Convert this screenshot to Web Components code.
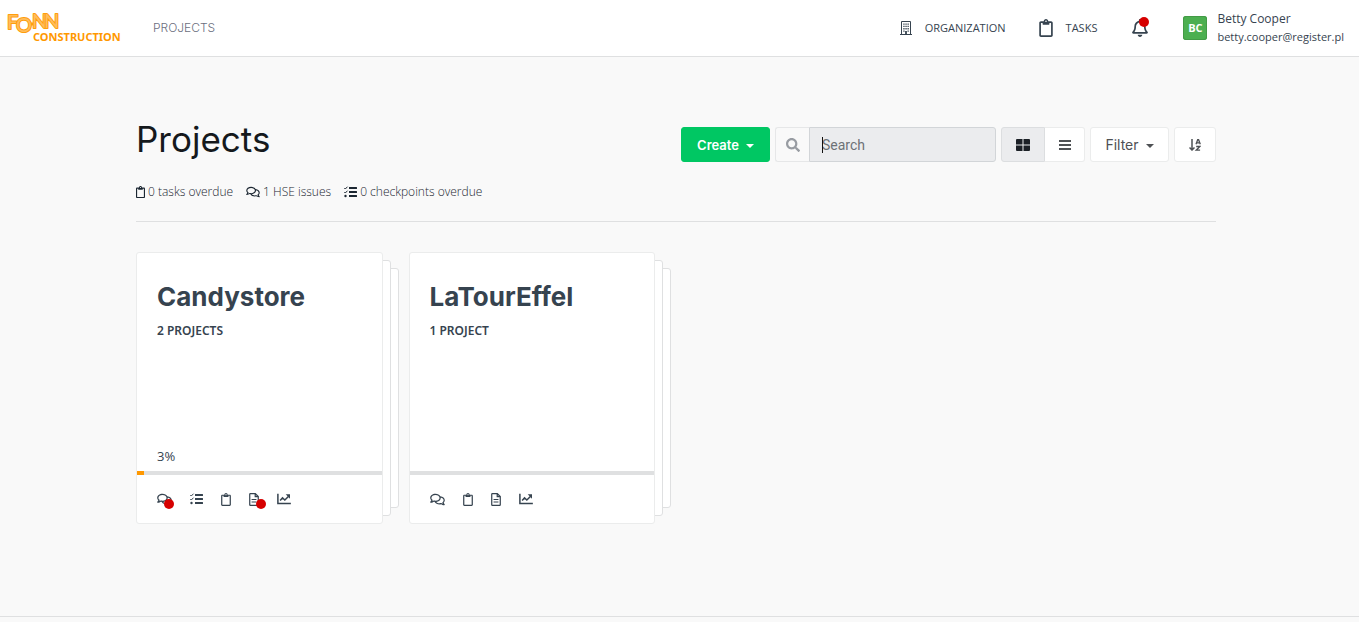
<!DOCTYPE html>
<html lang="en">
<head>
<meta charset="utf-8">
<title>Projects</title>
<style>
  body {
    margin: 0; min-height: 100vh; display: flex; flex-direction: column;
    background: #f9f9f9; color: #36434f;
    font: 12px/18px "Noto Sans", sans-serif;
    --line: #dfe0e1;
    --display: Inter, sans-serif;
    --light: "Open Sans", sans-serif;
  }
  main { flex: 1; padding: 62px 7px 40px 0; }
  .container { max-width: 1080px; margin: 0 auto; }
  footer { height: 5px; border-top: 1px solid #dfe0e1; }
</style>
</head>
<body>
<app-header></app-header>
<main>
  <div class="container">
    <project-heading></project-heading>
    <card-grid>
      <project-card heading="Candystore" count="2 PROJECTS" progress="3" icons="comments! tasks clipboard file! chart"></project-card>
      <project-card heading="LaTourEffel" count="1 PROJECT" icons="comments clipboard file chart"></project-card>
    </card-grid>
  </div>
</main>
<footer></footer>

<script>
const ICONS = {
  search: ['0 0 512 512', '<path d="M505 442.7L405.3 343c-4.5-4.5-10.6-7-17-7H372c27.6-35.3 44-79.7 44-128C416 93.1 322.9 0 208 0S0 93.1 0 208s93.1 208 208 208c48.3 0 92.7-16.4 128-44v16.3c0 6.4 2.5 12.5 7 17l99.7 99.7c9.4 9.4 24.6 9.4 33.9 0l28.3-28.3c9.4-9.4 9.4-24.6.1-34zM208 336c-70.7 0-128-57.2-128-128 0-70.7 57.2-128 128-128 70.7 0 128 57.2 128 128 0 70.7-57.2 128-128 128z"/>'],
  clipboard: ['0 0 384 512', '<path d="M336 64h-80c0-35.3-28.7-64-64-64s-64 28.7-64 64H48C21.5 64 0 85.5 0 112v352c0 26.5 21.5 48 48 48h288c26.5 0 48-21.5 48-48V112c0-26.5-21.5-48-48-48zM192 40c13.3 0 24 10.7 24 24s-10.7 24-24 24-24-10.7-24-24 10.7-24 24-24zm144 418c0 3.3-2.7 6-6 6H54c-3.3 0-6-2.7-6-6V118c0-3.3 2.7-6 6-6h42v36c0 6.6 5.4 12 12 12h168c6.6 0 12-5.4 12-12v-36h42c3.3 0 6 2.7 6 6z"/>'],
  bell: ['0 0 448 512', '<path d="M439.39 362.29c-19.32-20.76-55.47-51.99-55.47-154.29 0-77.7-54.48-139.9-127.94-155.16V32c0-17.67-14.32-32-31.98-32s-31.98 14.33-31.98 32v20.84C118.56 68.1 64.08 130.3 64.08 208c0 102.3-36.15 133.53-55.47 154.29-6 6.45-8.66 14.16-8.61 21.71.11 16.4 12.98 32 32.1 32h383.8c19.12 0 32-15.6 32.1-32 .05-7.55-2.61-15.27-8.61-21.71zM67.53 368c21.22-27.97 44.42-74.33 44.53-159.42 0-.2-.06-.38-.06-.58 0-61.86 50.14-112 112-112s112 50.14 112 112c0 .2-.06.38-.06.58.11 85.1 23.31 131.46 44.53 159.42H67.53zM224 512c35.32 0 63.97-28.65 63.97-64H160.03c0 35.35 28.65 64 63.97 64z"/>'],
  comments: ['0 0 576 512', '<path d="M532 386.2c27.5-27.1 44-61.1 44-98.2 0-80-76.5-146.1-176.2-157.9C368.3 72.5 294.3 32 208 32 93.1 32 0 103.6 0 192c0 37 16.5 71 44 98.2-15.3 30.7-37.3 54.5-37.7 54.9-6.3 6.7-8.1 16.5-4.4 25 3.6 8.5 12 14 21.2 14 53.5 0 96.7-20.2 125.2-38.8 9.2 2.1 18.7 3.7 28.4 4.9C208.1 407.6 281.8 448 368 448c20.8 0 40.8-2.4 59.8-6.8C456.3 459.7 499.4 480 553 480c9.2 0 17.5-5.5 21.2-14 3.6-8.5 1.9-18.3-4.4-25-.4-.3-22.5-24.1-37.8-54.8zm-392.8-92.3L122.1 305c-14.1 9.1-28.5 16.3-43.1 21.4 2.7-4.7 5.4-9.7 8-14.8l15.5-31.1L77.7 256C64.2 242.6 48 220.7 48 192c0-60.7 73.3-112 160-112s160 51.3 160 112-73.3 112-160 112c-16.5 0-33-1.9-49-5.6l-19.8-4.5zM498.3 352l-24.7 24.4 15.5 31.1c2.6 5.1 5.3 10.1 8 14.8-14.6-5.1-29-12.3-43.1-21.4l-17.1-11.1-19.9 4.6c-16 3.7-32.5 5.6-49 5.6-54 0-102.2-20.1-131.3-49.7C338 339.5 416 272.9 416 192c0-3.4-.4-6.7-.7-10C479.7 196.5 528 238.8 528 288c0 28.7-16.2 50.6-29.7 64z"/>'],
  tasks: ['0 0 13 12', '<path d="M5 1h7.500a.5.5 0 0 1 .5.5v1a.5.5 0 0 1-.5.5H5zM5 5h7.500a.5.5 0 0 1 .5.5v1a.5.5 0 0 1-.5.5H5zM5 9h7.500a.5.5 0 0 1 .5.5v1a.5.5 0 0 1-.5.5H5z"/><circle cx="1.500" cy="10" r="1.200"/><path d="M.3 2l1 1L3.500.7M.3 6l1 1 2.200-2.300" fill="none" stroke="currentColor"/>'],
  building: ['0 0 12 14', '<path d="M1.5 13.500V.5h9v13M0 13.500h12" fill="none" stroke="currentColor"/><path d="M3.300 2.500h1.300v1.300H3.300zM5.400 2.500h1.300v1.300H5.400zM7.500 2.500h1.300v1.300H7.500zM3.300 4.800h1.300v1.300H3.300zM5.400 4.800h1.300v1.300H5.400zM7.500 4.800h1.300v1.300H7.500zM3.300 7.100h1.300v1.300H3.300zM5.400 7.100h1.300v1.300H5.400zM7.500 7.100h1.300v1.300H7.500zM3.300 9.400h1.300v1.300H3.300zM7.500 9.400h1.300v1.300H7.500zM5.100 10h1.800v3.500H5.100z"/>'],
  grid: ['0 0 14 12', '<path d="M1 0h5.500v5.500H0V1a1 1 0 0 1 1-1zM7.500 0H13a1 1 0 0 1 1 1v4.500H7.500zM0 6.500h6.500V12H1a1 1 0 0 1-1-1zM7.500 6.500H14V11a1 1 0 0 1-1 1H7.500z"/>'],
  bars: ['0 0 12 12', '<path d="M0 1h12v2H0zM0 5h12v2H0zM0 9h12v2H0z"/>'],
  caret: ['0 0 8 4', '<path d="M0 0h8L4 4z"/>'],
  sort: ['0 0 12 12', '<path d="M3 0v11M.5 8.500L3 11l2.500-2.500" fill="none" stroke="currentColor" stroke-width="1.500"/><path d="M7 5.300L8.700.7h.9l1.700 4.600M7.700 3.900h2.900M7.200 7.500h3.600L7.200 11.200h3.900" fill="none" stroke="currentColor" stroke-width="1.300"/>'],
  file: ['0 0 384 512', '<path d="M24 48q0-24 24-24h196l116 116v324q0 24-24 24H48q-24 0-24-24zM240 28v116h116" fill="none" stroke="currentColor" stroke-width="48"/><path d="M96 236h192v40H96zM96 336h192v40H96z"/>'],
  chart: ['0 0 512 448', '<path d="M28 32v356h484" fill="none" stroke="currentColor" stroke-width="56"/><path d="M112 280l88-96 88 80 132-130" fill="none" stroke="currentColor" stroke-width="56"/><path d="M320 50h160v160z"/>']
};

class FonnElement extends HTMLElement {
  connectedCallback() {
    if (!this.shadowRoot) this.attachShadow({ mode: 'open' }).innerHTML = this.render();
  }
}

customElements.define('ui-icon', class extends FonnElement {
  render() {
    const [box, shapes] = ICONS[this.getAttribute('name')];
    const w = this.getAttribute('w'), h = this.getAttribute('h');
    return `<style>
      :host { display: inline-flex; flex: none; position: relative; }
      svg { display: block; fill: currentColor; }
      :host([alert])::after { content: ""; position: absolute; width: 10px; height: 10px; border-radius: 50%; background: #d60000; left: 7px; bottom: -3px; }
      :host([alert=top])::after { bottom: auto; top: -2px; }
    </style><svg viewBox="${box}" width="${w}" height="${h}" aria-hidden="true">${shapes}</svg>`;
  }
});

customElements.define('fonn-logo', class extends FonnElement {
  render() {
    return `<style>
      :host { display: block; flex: none; }
      svg { display: block; overflow: visible; }
      .mark { font: 400 20px Lato, sans-serif; fill: #ffbc5c; stroke: #ff9e0d; stroke-width: 2; stroke-linejoin: round; paint-order: stroke; }
      .name { font: 700 11px "Noto Sans", sans-serif; fill: #ff9800; }
    </style>
    <svg width="116" height="40" viewBox="0 0 116 40" role="img" aria-label="Fonn Construction">
      <path d="M22 16h6" stroke="#ff9e0d" stroke-width="3"/>
      <text class="mark" x="0 9 25 37" y="21 24 20 20">FONN</text>
      <text class="name" x="26" y="33">CONSTRUCTION</text>
    </svg>`;
  }
});

customElements.define('app-header', class extends FonnElement {
  render() {
    return `<style>
      :host { display: block; background: #fff; border-bottom: 1px solid var(--line); }
      header { display: flex; align-items: center; min-height: 56px; padding: 0 15px 0 7px; }
      a { color: inherit; text-decoration: none; }
      nav { margin-left: 30px; flex: 1; font: 300 12px/18px var(--display); color: #6c6f80; }
      .links { display: flex; align-items: center; gap: 33px; font: 11px/18px var(--light); }
      .links a { display: flex; align-items: center; gap: 13px; }
      button { border: 0; padding: 0; background: none; color: inherit; display: flex; margin: 0 35px; }
      .user { display: flex; align-items: center; gap: 10px; font: 11px/18px var(--light); }
      .avatar { width: 24px; height: 24px; border-radius: 3px; background: #4caf50; color: #fff; font-weight: 700; line-height: 24px; text-align: center; box-shadow: inset 0 0 0 1px #439a46; }
      .name { font-size: 12px; }
    </style>
    <header>
      <a href="#"><fonn-logo></fonn-logo></a>
      <nav><a href="#">PROJECTS</a></nav>
      <div class="links">
        <a href="#"><ui-icon name="building" w="12" h="14"></ui-icon>ORGANIZATION</a>
        <a href="#"><ui-icon name="clipboard" w="14" h="18"></ui-icon>TASKS</a>
      </div>
      <button aria-label="Notifications"><ui-icon name="bell" w="16" h="18" alert="top"></ui-icon></button>
      <div class="user"><div class="avatar">BC</div><div><div class="name">Betty Cooper</div><div>betty.cooper@register.pl</div></div></div>
    </header>`;
  }
});

customElements.define('project-toolbar', class extends FonnElement {
  render() {
    return `<style>
      :host { display: flex; gap: 5px; height: 35px; }
      button { box-sizing: border-box; display: flex; align-items: center; justify-content: center; margin: 0; padding: 0; border: 1px solid #ebecec; border-radius: 3px; background: #fff; color: #4e5154; font: 400 14px/18px var(--display); }
      button ui-icon[name=caret] { margin: 3px 0 0 7px; }
      .create { width: 89px; background: #00c763; border-color: #00c763; color: #fff; font-weight: 600; font-size: 13px; }
      .filter { width: 79px; }
      .sort { width: 42px; }
      .toggle { display: flex; }
      .toggle button:first-child { width: 44px; border-radius: 3px 0 0 3px; background: #ebecee; color: #1b2026; border-color: #dcdee0; }
      .toggle button:last-child { width: 40px; border-radius: 0 3px 3px 0; border-left: 0; }
      .search { display: flex; width: 221px; }
      label { box-sizing: border-box; width: 34px; display: flex; align-items: center; justify-content: center; border: 1px solid #e6e7e8; border-right: 0; border-radius: 3px 0 0 3px; color: #989ca2; }
      .field { flex: 1; position: relative; display: flex; }
      input { box-sizing: border-box; width: 100%; margin: 0; padding: 0 12px; border: 1px solid #d2d5d8; border-radius: 0 3px 3px 0; background: #ebecee; color: #36434f; font: 14px/18px Roboto, sans-serif; }
      input::placeholder { color: #6d7276; opacity: 1; }
      .cursor { position: absolute; left: 13px; top: 10px; width: 1px; height: 16px; background: #111; }
    </style>
    <button class="create">Create<ui-icon name="caret" w="8" h="4"></ui-icon></button>
    <div class="search">
      <label for="q" aria-label="Search"><ui-icon name="search" w="14" h="14"></ui-icon></label>
      <div class="field"><input id="q" type="text" placeholder="Search"><span class="cursor"></span></div>
    </div>
    <div class="toggle">
      <button aria-label="Grid view"><ui-icon name="grid" w="14" h="12"></ui-icon></button>
      <button aria-label="List view"><ui-icon name="bars" w="12" h="12"></ui-icon></button>
    </div>
    <button class="filter">Filter<ui-icon name="caret" w="8" h="4"></ui-icon></button>
    <button class="sort" aria-label="Sort"><ui-icon name="sort" w="12" h="12"></ui-icon></button>`;
  }
});

customElements.define('project-heading', class extends FonnElement {
  render() {
    return `<style>
      :host { display: block; border-bottom: 1px solid var(--line); }
      .row { display: flex; justify-content: space-between; align-items: flex-start; }
      h1 { margin: 0; font: 400 35px/40px var(--display); color: #15191d; }
      project-toolbar { margin-top: 8px; }
      ul { display: flex; gap: 13px; list-style: none; margin: 21px 0 0; padding: 0 0 20px; font-family: var(--light); font-weight: 300; color: #1c2732; }
      li { display: flex; align-items: center; gap: 3px; }
    </style>
    <div class="row"><h1>Projects</h1><project-toolbar></project-toolbar></div>
    <ul>
      <li><ui-icon name="clipboard" w="9" h="12"></ui-icon>0 tasks overdue</li>
      <li><ui-icon name="comments" w="14" h="12"></ui-icon>1 HSE issues</li>
      <li><ui-icon name="tasks" w="13" h="12"></ui-icon>0 checkpoints overdue</li>
    </ul>`;
  }
});

customElements.define('card-grid', class extends FonnElement {
  render() {
    return `<style>
      :host { display: grid; grid-template-columns: repeat(auto-fill, minmax(240px, 1fr)); gap: 24px 10px; margin-top: 30px; }
    </style><slot></slot>`;
  }
});

customElements.define('project-card', class extends FonnElement {
  render() {
    const progress = this.getAttribute('progress');
    const size = { comments: [15, 13], tasks: [13, 12], clipboard: [10, 13], file: [10, 13], chart: [14, 12] };
    const icons = this.getAttribute('icons').split(' ').map(item => {
      const name = item.replace('!', ''), [w, h] = size[name];
      return `<a href="#" aria-label="${name}"><ui-icon name="${name}" w="${w}" h="${h}" ${item.endsWith('!') ? 'alert' : ''}></ui-icon></a>`;
    }).join('');
    return `<style>
      :host { display: block; position: relative; padding-right: 16px; }
      .sheet { position: absolute; background: #fff; border: 1px solid var(--line); border-radius: 3px; }
      .back { inset: 16px 0 16px 16px; }
      .middle { inset: 8px 8px 8px 8px; }
      article { position: relative; box-sizing: border-box; min-height: 272px; display: flex; flex-direction: column; background: #fff; border: 1px solid #ebecec; border-radius: 3px; }
      .body { flex: 1; padding: 28px 20px 6px; display: flex; flex-direction: column; }
      h2 { margin: 0; font: 700 26px/32px var(--display); color: #36434f; }
      .count { margin: 9px 0 0; font-weight: 600; }
      .percent { margin: auto 0 0; font: 13px/18px var(--light); }
      .track { height: 4px; background: #dfe0e1; }
      .fill { height: 4px; background: #ff9800; width: ${progress || 0}%; }
      .actions { display: flex; align-items: center; gap: 18px; height: 48px; padding-left: 20px; }
      a { color: inherit; display: flex; }
    </style>
    <div class="sheet back"></div><div class="sheet middle"></div>
    <article>
      <div class="body"><h2>${this.getAttribute('heading')}</h2><p class="count">${this.getAttribute('count')}</p>${progress ? `<p class="percent">${progress}%</p>` : ''}</div>
      <div class="track" role="progressbar" aria-valuenow="${progress || 0}"><div class="fill"></div></div>
      <div class="actions">${icons}</div>
    </article>`;
  }
});
</script>
</body>
</html>
